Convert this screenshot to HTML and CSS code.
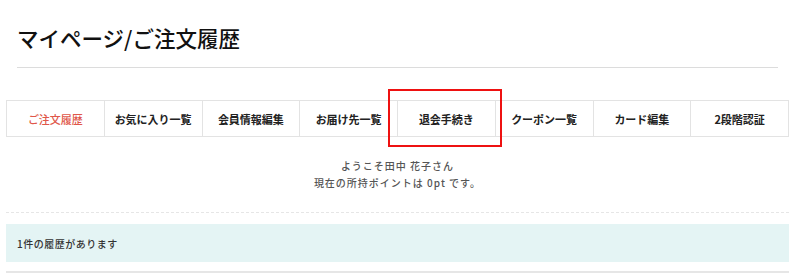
FILE: index.html
```html
<!DOCTYPE html>
<html lang="ja">
<head>
  <meta charset="UTF-8">
  <meta name="viewport" content="width=device-width, initial-scale=1.0">
  <title>マイページ/ご注文履歴</title>
  <link rel="stylesheet" href="styles.css">
</head>
<body>
  <div class="page">
    <div class="page-header">
      <h1>マイページ/ご注文履歴</h1>
    </div>

    <div class="mypage-nav">
      <a href="#" class="active">ご注文履歴</a>
      <a href="#">お気に入り一覧</a>
      <a href="#">会員情報編集</a>
      <a href="#">お届け先一覧</a>
      <a href="#" class="marked">退会手続き</a>
      <a href="#">クーポン一覧</a>
      <a href="#">カード編集</a>
      <a href="#">2段階認証</a>
    </div>

    <div class="welcome">
      <p>ようこそ田中 花子さん</p>
      <p>現在の所持ポイントは 0pt です。</p>
    </div>

    <div class="history">
      <div class="history-count">1件の履歴があります</div>
    </div>
  </div>
</body>
</html>
```

FILE: styles.css
```css
* {
  box-sizing: border-box;
  margin: 0;
  padding: 0;
}

body {
  font-family: "Noto Sans CJK JP", "Noto Sans", sans-serif;
  background: #fff;
  color: #222;
}

.page {
  width: 783px;
  margin-left: 6px;
}

.page-header {
  padding: 0 11px;
}

.page-header h1 {
  font-size: 21.5px;
  font-weight: 500;
  line-height: 30px;
  padding: 23px 0 14px;
  border-bottom: 1px solid #dcdcdc;
  color: #111;
}

.mypage-nav {
  display: flex;
  margin-top: 32px;
  border: 1px solid #e3e3e3;
}

.mypage-nav a {
  position: relative;
  flex: 1;
  height: 35px;
  display: flex;
  align-items: center;
  justify-content: center;
  font-size: 11px;
  font-weight: 700;
  color: #222;
  text-decoration: none;
  border-left: 1px solid #e3e3e3;
}

.mypage-nav a:first-child {
  border-left: none;
}

.mypage-nav a.active {
  color: #e0574a;
  font-weight: 500;
}

.mypage-nav a.marked::after {
  content: "";
  position: absolute;
  left: -10px;
  top: -12px;
  right: -7px;
  bottom: -11px;
  border: 2px solid #ee1111;
}

.welcome {
  padding: 20px 0 21px;
  text-align: center;
  font-size: 10px;
  font-weight: 500;
  line-height: 17px;
  letter-spacing: 1px;
  color: #555;
  border-bottom: 1px dashed #e6e6e6;
}

.history {
  margin-top: 11px;
  padding-bottom: 9px;
  border-bottom: 2px solid #e6e6e6;
}

.history-count {
  padding: 0 11px;
  height: 38px;
  display: flex;
  align-items: center;
  background: #e4f4f4;
  font-size: 10px;
  font-weight: 500;
  letter-spacing: 0.5px;
  color: #333;
}
```
